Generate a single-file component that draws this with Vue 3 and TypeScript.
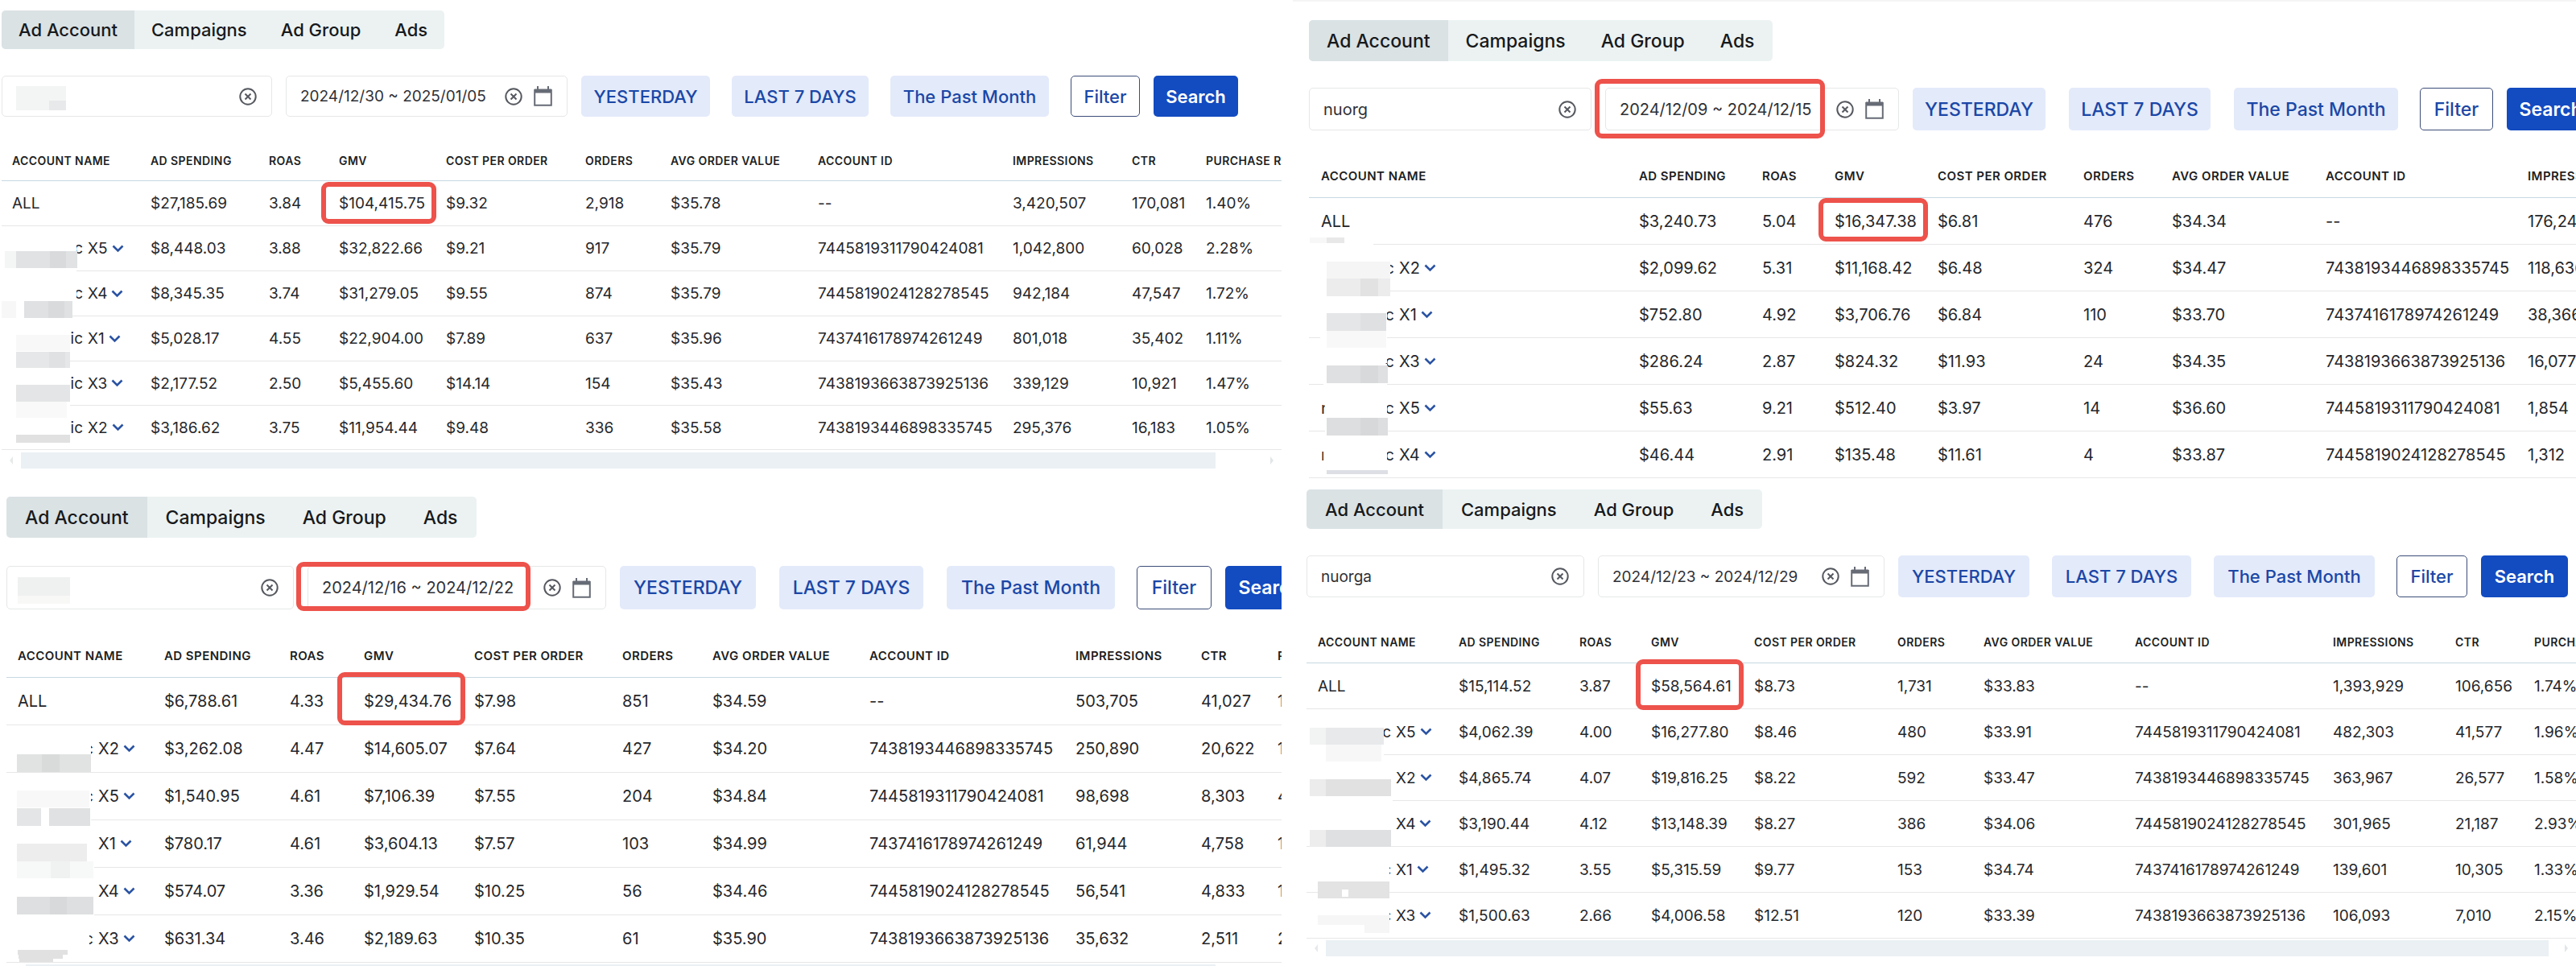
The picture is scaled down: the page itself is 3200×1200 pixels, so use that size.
<script setup lang="ts">
import { ref } from 'vue'

interface Row {
  lead?: string
  tail?: string
  name: string
  cells: string[]
}
type Block = [number, number, number, number, string]
interface Panel {
  id: string
  account: string
  accountBlocks: Block[]
  period: string
  markPeriod: boolean
  fields: [number, number]
  chips: [number, number, number]
  actions: [number, number]
  columns: number[]
  heads: string[]
  rows: Row[]
  blocks: Block[]
  scrollbar: boolean
}

const HEADS = [
  'ACCOUNT NAME', 'AD SPENDING', 'ROAS', 'GMV', 'COST PER ORDER', 'ORDERS',
  'AVG ORDER VALUE', 'ACCOUNT ID', 'IMPRESSIONS', 'CTR', 'PURCHASE RATE',
]
const TABS = ['Ad Account', 'Campaigns', 'Ad Group', 'Ads']
const PERIODS = ['YESTERDAY', 'LAST 7 DAYS', 'The Past Month']

const X1 = '7437416178974261249'
const X2 = '7438193446898335745'
const X3 = '7438193663873925136'
const X4 = '7445819024128278545'
const X5 = '7445819311790424081'

const W = '#fff'

const left: Panel[] = [
  {
    id: 'a',
    account: '',
    accountBlocks: [[17, 12, 62, 30, '#f3f4f4'], [58, 30, 21, 12, '#e8e9ea']],
    period: '2024/12/30 ~ 2025/01/05',
    markPeriod: false,
    fields: [336, 350],
    chips: [160, 170, 197],
    actions: [86, 105],
    columns: [185, 147, 87, 133, 173, 106, 183, 242, 148, 92, 150],
    heads: HEADS,
    rows: [
      { name: 'ALL', cells: ['$27,185.69', '3.84', '$104,415.75', '$9.32', '2,918', '$35.78', '--', '3,420,507', '170,081', '1.40%'] },
      { tail: 'c', name: 'X5', cells: ['$8,448.03', '3.88', '$32,822.66', '$9.21', '917', '$35.79', X5, '1,042,800', '60,028', '2.28%'] },
      { tail: 'c', name: 'X4', cells: ['$8,345.35', '3.74', '$31,279.05', '$9.55', '874', '$35.79', X4, '942,184', '47,547', '1.72%'] },
      { tail: 'ic', name: 'X1', cells: ['$5,028.17', '4.55', '$22,904.00', '$7.89', '637', '$35.96', X1, '801,018', '35,402', '1.11%'] },
      { tail: 'ic', name: 'X3', cells: ['$2,177.52', '2.50', '$5,455.60', '$14.14', '154', '$35.43', X3, '339,129', '10,921', '1.47%'] },
      { tail: 'ic', name: 'X2', cells: ['$3,186.62', '3.75', '$11,954.44', '$9.48', '336', '$35.58', X2, '295,376', '16,183', '1.05%'] },
    ],
    blocks: [
      [0, 60, 93, 90, W], [0, 150, 85, 180, W],
      [18, 87, 76, 21, '#e0e2e3'], [4, 87, 14, 21, '#f4f5f5'], [60, 87, 20, 21, '#d8dadb'],
      [28, 149, 60, 21, '#dfe1e2'], [0, 149, 18, 21, '#f7f7f7'], [58, 149, 20, 21, '#d8dadb'],
      [18, 191, 67, 20, '#f8f8f8'], [18, 212, 67, 20, '#e5e7e8'], [59, 212, 20, 20, '#dfe1e2'],
      [18, 253, 67, 21, '#e4e5e6'], [18, 274, 63, 20, '#f9f9f9'], [18, 315, 67, 10, '#e1e1e1'],
    ],
    scrollbar: true,
  },
  {
    id: 'c',
    account: '',
    accountBlocks: [[13, 13, 65, 23, '#eff0f0'], [13, 36, 65, 10, '#f8f8f7']],
    period: '2024/12/16 ~ 2024/12/22',
    markPeriod: true,
    fields: [357, 371],
    chips: [169, 179, 209],
    actions: [93, 111],
    columns: [196, 156, 92, 137, 184, 112, 195, 256, 156, 95, 160],
    heads: HEADS,
    rows: [
      { name: 'ALL', cells: ['$6,788.61', '4.33', '$29,434.76', '$7.98', '851', '$34.59', '--', '503,705', '41,027', '1'] },
      { tail: 'c', name: 'X2', cells: ['$3,262.08', '4.47', '$14,605.07', '$7.64', '427', '$34.20', X2, '250,890', '20,622', '1'] },
      { tail: 'c', name: 'X5', cells: ['$1,540.95', '4.61', '$7,106.39', '$7.55', '204', '$34.84', X5, '98,698', '8,303', '4'] },
      { tail: '', name: 'X1', cells: ['$780.17', '4.61', '$3,604.13', '$7.57', '103', '$34.99', X1, '61,944', '4,758', '1'] },
      { tail: '', name: 'X4', cells: ['$574.07', '3.36', '$1,929.54', '$10.25', '56', '$34.46', X4, '56,541', '4,833', '1'] },
      { tail: 'c', name: 'X3', cells: ['$631.34', '3.46', '$2,189.63', '$10.35', '61', '$35.90', X3, '35,632', '2,511', '2'] },
    ],
    blocks: [
      [0, 62, 105, 33, W], [0, 120, 105, 64, W], [0, 190, 109, 80, W], [0, 250, 109, 45, W], [0, 298, 103, 40, W],
      [13, 95, 92, 22, '#e1e2e2'], [44, 95, 22, 22, '#d9dada'],
      [13, 140, 90, 21, '#f8f8f8'], [13, 162, 30, 22, '#e4e5e6'], [53, 162, 51, 22, '#e0e1e2'],
      [13, 206, 87, 22, '#ededed'], [13, 228, 95, 21, '#f7f8f8'], [55, 228, 24, 21, '#f0f1f1'],
      [13, 272, 95, 22, '#dedfe0'], [54, 272, 21, 22, '#d8d9da'],
      [14, 338, 62, 6, '#e1e1e1'], [15, 344, 55, 5, '#e1e1e1'], [16, 349, 42, 4, '#e1e1e1'],
    ],
    scrollbar: true,
  },
]

const right: Panel[] = [
  {
    id: 'b',
    account: 'nuorg',
    accountBlocks: [],
    period: '2024/12/09 ~ 2024/12/15',
    markPeriod: true,
    fields: [351, 365],
    chips: [165, 176, 204],
    actions: [91, 109],
    columns: [410, 153, 90, 128, 181, 110, 191, 251, 160],
    heads: HEADS.slice(0, 9),
    rows: [
      { name: 'ALL', cells: ['$3,240.73', '5.04', '$16,347.38', '$6.81', '476', '$34.34', '--', '176,24'] },
      { tail: 'c', name: 'X2', cells: ['$2,099.62', '5.31', '$11,168.42', '$6.48', '324', '$34.47', X2, '118,636'] },
      { tail: 'c', name: 'X1', cells: ['$752.80', '4.92', '$3,706.76', '$6.84', '110', '$33.70', X1, '38,366'] },
      { tail: 'c', name: 'X3', cells: ['$286.24', '2.87', '$824.32', '$11.93', '24', '$34.35', X3, '16,077'] },
      { lead: 'n', tail: 'c', name: 'X5', cells: ['$55.63', '9.21', '$512.40', '$3.97', '14', '$36.60', X5, '1,854'] },
      { lead: 'n', tail: 'c', name: 'X4', cells: ['$46.44', '2.91', '$135.48', '$11.61', '4', '$33.87', X4, '1,312'] },
    ],
    blocks: [
      [0, 55, 80, 5, W], [0, 60, 101, 62, W], [14, 125, 83, 80, W], [18, 206, 79, 50, W], [20, 250, 77, 75, W], [18, 310, 79, 30, W],
      [1, 49, 21, 7, '#f7f7f7'], [22, 49, 22, 7, '#e8e8e8'],
      [22, 79, 79, 21, '#f5f5f5'], [22, 100, 79, 22, '#ececed'], [64, 100, 22, 22, '#e2e2e3'],
      [22, 143, 74, 22, '#e5e6e7'], [64, 143, 32, 22, '#dfe0e1'], [22, 165, 74, 21, '#f8f8f8'],
      [22, 208, 76, 22, '#dfe0e1'], [64, 208, 22, 22, '#d7d9da'],
      [22, 273, 76, 22, '#dddee0'], [64, 273, 22, 22, '#d7d8d9'], [22, 338, 76, 5, '#dddfe5'],
    ],
    scrollbar: false,
  },
  {
    id: 'd',
    account: 'nuorga',
    accountBlocks: [],
    period: '2024/12/23 ~ 2024/12/29',
    markPeriod: false,
    fields: [345, 356],
    chips: [163, 173, 200],
    actions: [88, 108],
    columns: [189, 150, 89, 128, 178, 107, 188, 246, 152, 98, 160],
    heads: HEADS,
    rows: [
      { name: 'ALL', cells: ['$15,114.52', '3.87', '$58,564.61', '$8.73', '1,731', '$33.83', '--', '1,393,929', '106,656', '1.74%'] },
      { tail: 'c', name: 'X5', cells: ['$4,062.39', '4.00', '$16,277.80', '$8.46', '480', '$33.91', X5, '482,303', '41,577', '1.96%'] },
      { tail: '', name: 'X2', cells: ['$4,865.74', '4.07', '$19,816.25', '$8.22', '592', '$33.47', X2, '363,967', '26,577', '1.58%'] },
      { tail: '', name: 'X4', cells: ['$3,190.44', '4.12', '$13,148.39', '$8.27', '386', '$34.06', X4, '301,965', '21,187', '2.93%'] },
      { tail: 'c', name: 'X1', cells: ['$1,495.32', '3.55', '$5,315.59', '$9.77', '153', '$34.74', X1, '139,601', '10,305', '1.33%'] },
      { tail: 'c', name: 'X3', cells: ['$1,500.63', '2.66', '$4,006.58', '$12.51', '120', '$33.39', X3, '106,093', '7,010', '2.15%'] },
    ],
    blocks: [
      [0, 60, 96, 65, W], [0, 125, 107, 50, W], [0, 180, 107, 45, W], [0, 232, 103, 39, W], [0, 290, 103, 50, W],
      [4, 80, 20, 21, '#f2f3f3'], [24, 80, 72, 21, '#e8e9ea'], [24, 101, 69, 21, '#f7f7f7'],
      [4, 144, 20, 21, '#ececec'], [24, 144, 81, 21, '#e1e1e2'],
      [4, 207, 20, 21, '#ededed'], [24, 207, 81, 21, '#dfe0e1'],
      [14, 271, 89, 21, '#e3e3e4'], [44, 281, 8, 9, W],
      [14, 313, 89, 12, '#f6f6f6'], [72, 325, 31, 10, '#f6f6f6'],
    ],
    scrollbar: true,
  },
]

const sides = [left, right]
const activeTab = ref('Ad Account')
const sum = (values: number[]) => values.reduce((a, b) => a + b, 0)
</script>

<template>
  <main class="board">
    <div v-for="(side, s) in sides" :key="s" class="side">
      <section v-for="p in side" :key="p.id" class="panel" :class="'panel-' + p.id">
        <nav class="tabs">
          <button
            v-for="t in TABS"
            :key="t"
            type="button"
            class="tab"
            :class="{ active: t === activeTab }"
            @click="activeTab = t"
          >{{ t }}</button>
        </nav>

        <form class="filters" @submit.prevent>
          <div class="field" :style="{ width: p.fields[0] + 'px' }">
            <input v-model="p.account" class="input" type="text" aria-label="Account name" />
            <svg v-if="p.accountBlocks.length" class="field-mosaic" width="80" height="50" aria-hidden="true">
              <rect v-for="(b, i) in p.accountBlocks" :key="i" :x="b[0]" :y="b[1]" :width="b[2]" :height="b[3]" :fill="b[4]" />
            </svg>
            <button type="button" class="icon" aria-label="Clear account">
              <svg width="22" height="22" viewBox="0 0 22 22" fill="none" stroke="#55585f" stroke-width="2">
                <circle cx="11" cy="11" r="9.7" />
                <path d="M7.5 7.5l7 7M14.5 7.5l-7 7" />
              </svg>
            </button>
          </div>
          <div class="field" :style="{ width: p.fields[1] + 'px' }">
            <input v-model="p.period" class="input" type="text" aria-label="Date range" />
            <button type="button" class="icon" aria-label="Clear dates">
              <svg width="22" height="22" viewBox="0 0 22 22" fill="none" stroke="#55585f" stroke-width="2">
                <circle cx="11" cy="11" r="9.7" />
                <path d="M7.5 7.5l7 7M14.5 7.5l-7 7" />
              </svg>
            </button>
            <button type="button" class="icon" aria-label="Open calendar">
              <svg width="23" height="25" viewBox="0 0 23 25" fill="none" stroke="#666b75">
                <path d="M1.2 5h20.6v18.8H1.2z" stroke-width="2" />
                <path d="M1 6h21" stroke-width="5" />
                <path d="M5 0v5M18 0v5" stroke-width="2" />
              </svg>
            </button>
            <span v-if="p.markPeriod" class="mark mark-period"></span>
          </div>
          <div class="chips">
            <button
              v-for="(t, i) in PERIODS"
              :key="t"
              type="button"
              class="chip"
              :style="{ width: p.chips[i] + 'px' }"
            >{{ t }}</button>
          </div>
          <div class="actions">
            <button type="button" class="chip outline" :style="{ width: p.actions[0] + 'px' }">Filter</button>
            <button type="submit" class="chip solid" :style="{ width: p.actions[1] + 'px' }">Search</button>
          </div>
        </form>

        <div class="sheet">
          <table :style="{ width: sum(p.columns) + 'px' }">
            <colgroup>
              <col v-for="(w, i) in p.columns" :key="i" :style="{ width: w + 'px' }" />
            </colgroup>
            <thead>
              <tr><th v-for="h in p.heads" :key="h" scope="col">{{ h }}</th></tr>
            </thead>
            <tbody>
              <tr v-for="(r, i) in p.rows" :key="r.name">
                <td>
                  <div class="name">
                    <span v-if="i > 0" class="prefix"><span>{{ r.lead }}</span><span>{{ r.tail }}</span></span>
                    <span>{{ r.name }}</span>
                    <button v-if="i > 0" type="button" class="expand" :aria-label="'Expand ' + r.name">
                      <svg width="15" height="10" viewBox="0 0 15 10" fill="none" stroke="#2a53a3" stroke-width="2.6">
                        <path d="M1.5 1.5l6 6 6-6" />
                      </svg>
                    </button>
                  </div>
                </td>
                <td v-for="(c, j) in r.cells" :key="j">
                  {{ c }}<span v-if="i === 0 && j === 2" class="mark mark-gmv"></span>
                </td>
              </tr>
            </tbody>
          </table>
          <svg class="mosaic" width="120" height="360" aria-hidden="true">
            <rect v-for="(b, i) in p.blocks" :key="i" :x="b[0]" :y="b[1]" :width="b[2]" :height="b[3]" :fill="b[4]" />
          </svg>
        </div>

        <div v-if="p.scrollbar" class="scrollbar">
          <span class="arrow arrow-left"></span>
          <span class="thumb"></span>
          <span class="arrow arrow-right"></span>
        </div>
      </section>
    </div>
  </main>
</template>

<style>
body {
  margin: 0;
  background: #fff;
}
</style>

<style scoped>
.board {
  display: grid;
  grid-template-columns: 199fr 201fr;
  font-family: "Inter", "Liberation Sans", sans-serif;
  color: #26272b;
}
.side {
  min-width: 0;
  overflow: hidden;
}
button,
input {
  font-family: inherit;
  border: 0;
  padding: 0;
  margin: 0;
  background: none;
  box-sizing: border-box;
}
button {
  cursor: pointer;
}

.panel-a {
  --cell: 19px; --head: 14px; --tab: 22px; --chip: 22px;
  --tab-pad: 21px; --tab-h: 48px; --field-h: 51px; --head-h: 50px; --row-h: 56px;
  --stack: 33px; --above-table: 30px; --wide: 27px; --prefix: 94px; --inset: 13px;
  padding: 13px 0 0 2px;
}
.panel-b {
  --cell: 20px; --head: 15px; --tab: 23px; --chip: 23px;
  --tab-pad: 22px; --tab-h: 51px; --field-h: 53px; --head-h: 54px; --row-h: 58px;
  --stack: 33px; --above-table: 30px; --wide: 29px; --prefix: 97px; --inset: 15px;
  margin-left: 14px;
  padding: 23px 0 0 20px;
  border-top: 2px solid #f5f5f5;
}
.panel-c {
  --cell: 20px; --head: 15px; --tab: 23px; --chip: 23px;
  --tab-pad: 23px; --tab-h: 51px; --field-h: 54px; --head-h: 54px; --row-h: 59px;
  --stack: 35px; --above-table: 31px; --wide: 29px; --prefix: 100px; --inset: 14px;
  padding: 35px 0 0 8px;
}
.panel-d {
  --cell: 19px; --head: 14px; --tab: 22px; --chip: 22px;
  --tab-pad: 23px; --tab-h: 49px; --field-h: 52px; --head-h: 52px; --row-h: 57px;
  --stack: 33px; --above-table: 30px; --wide: 28px; --prefix: 97px; --inset: 14px;
  padding: 14px 0 0 31px;
}

.tabs {
  display: flex;
  width: fit-content;
  height: var(--tab-h);
  border-radius: 5px;
  overflow: hidden;
  background: #ecf2f2;
}
.tab {
  padding: 0 var(--tab-pad);
  font-size: var(--tab);
  font-weight: 500;
  color: #17191c;
  white-space: nowrap;
}
.tab.active {
  background: #dae2e4;
}

.filters {
  display: flex;
  gap: 17px;
  margin-top: var(--stack);
  height: var(--field-h);
}
.field {
  position: relative;
  flex: none;
  display: flex;
  align-items: center;
  gap: 14px;
  box-sizing: border-box;
  padding: 0 18px 0 17px;
  border: 1px solid #e6e7e7;
  border-radius: 5px;
}
.input {
  flex: 1;
  min-width: 0;
  height: 100%;
  font-size: var(--cell);
  color: #303136;
  outline: none;
}
.icon {
  flex: none;
  display: flex;
}
.field-mosaic {
  position: absolute;
  left: 0;
  top: 0;
}
.chips,
.actions {
  display: flex;
  flex: none;
  gap: var(--wide);
}
.actions {
  gap: 17px;
  margin-left: 10px;
}
.chip {
  flex: none;
  border-radius: 5px;
  background: #e3eafa;
  color: #1b47a6;
  font-size: var(--chip);
  font-weight: 500;
  text-align: center;
  white-space: nowrap;
}
.chip.outline {
  background: #fff;
  border: 1px solid #3c4d78;
}
.chip.solid {
  background: #134bc0;
  color: #fff;
  font-weight: 600;
}

.sheet {
  position: relative;
  margin-top: var(--above-table);
}
table {
  table-layout: fixed;
  border-collapse: separate;
  border-spacing: 0;
}
th,
td {
  padding: 0;
  text-align: left;
  white-space: nowrap;
  vertical-align: middle;
  box-sizing: border-box;
}
th {
  height: var(--head-h);
  font-size: var(--head);
  font-weight: 600;
  letter-spacing: 0.03em;
  color: #1d1f24;
  border-bottom: 1px solid #c6d8e2;
}
td {
  position: relative;
  height: var(--row-h);
  font-size: var(--cell);
  border-bottom: 1px solid #e6e7e6;
}
.panel-a tr:nth-child(n + 5) td {
  height: 55px;
}
th:first-child,
td:first-child {
  padding-left: var(--inset);
}
.name {
  display: flex;
  align-items: center;
}
.prefix {
  display: flex;
  justify-content: space-between;
  flex: none;
  box-sizing: border-box;
  width: var(--prefix);
  padding-right: 6px;
}
.expand {
  display: flex;
  margin-left: 5px;
}
.mosaic {
  position: absolute;
  left: 0;
  top: var(--head-h);
  pointer-events: none;
}

.mark {
  position: absolute;
  z-index: 1;
  box-sizing: border-box;
  border: 6px solid #ed524b;
  border-radius: 9px;
  pointer-events: none;
}
.panel-a .mark-gmv { inset: 1px auto 2px -22px; width: 143px; }
.panel-b .mark-gmv { inset: 0 auto 3px -20px; width: 136px; }
.panel-c .mark-gmv { inset: -7px auto -1px -33px; width: 159px; }
.panel-d .mark-gmv { inset: -5px auto -2px -19px; width: 134px; }
.panel-b .mark-period { inset: -12px auto -11px -14px; width: 286px; }
.panel-c .mark-period { inset: -6px auto -3px -15px; width: 291px; }

.scrollbar {
  display: flex;
  align-items: center;
  height: 20px;
  margin-top: 3px;
}
.thumb {
  flex: 1;
  height: 100%;
  background: #eaf0f3;
}
.arrow {
  width: 24px;
  height: 10px;
  display: flex;
  justify-content: center;
}
.arrow::before {
  content: "";
  border: 5px solid transparent;
}
.arrow-left::before {
  border-left-width: 0;
  border-right: 4px solid #e6e9ea;
}
.arrow-right::before {
  border-right-width: 0;
  border-left: 4px solid #e1e6e8;
}
.arrow-right {
  width: 82px;
  justify-content: flex-end;
  padding-right: 10px;
  box-sizing: border-box;
}
.panel-c .scrollbar {
  height: 2px;
  margin-top: 2px;
}
.panel-c .arrow {
  visibility: hidden;
}
.panel-d .scrollbar {
  margin-top: 2px;
}
.panel-d .arrow-right {
  width: 34px;
}
</style>
